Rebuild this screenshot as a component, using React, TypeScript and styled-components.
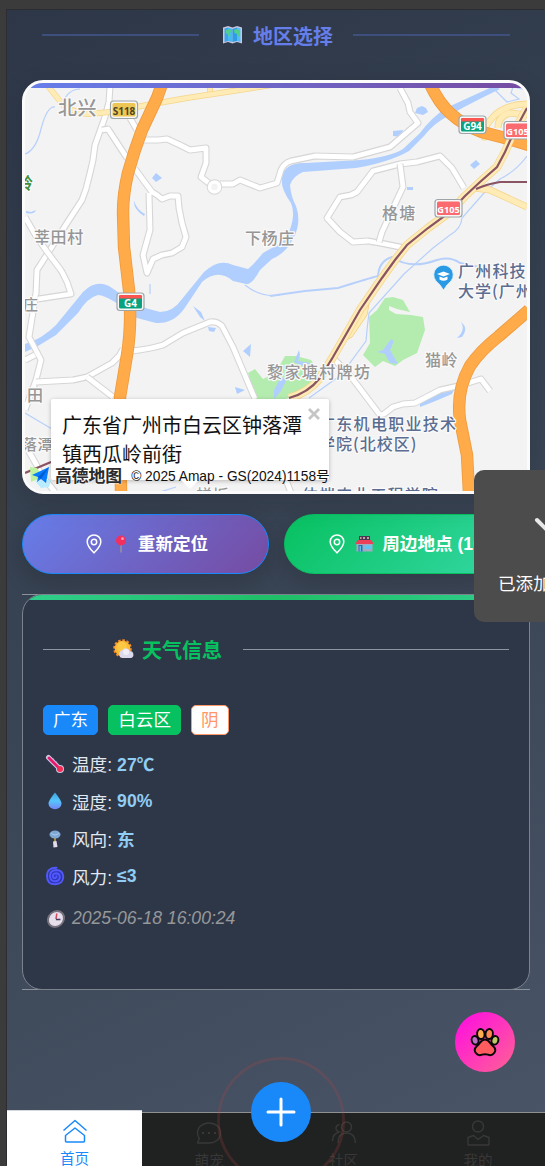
import React from "react";
import styled, { createGlobalStyle, css } from "styled-components";

const sans = `"Liberation Sans", "Noto Sans CJK SC", sans-serif`;

const Global = createGlobalStyle`
  * { box-sizing: border-box; }
  html, body { margin: 0; background: #3b3b3b; overflow: hidden; }
  body { font-family: ${sans}; font-size: 17.6px; }
  svg { display: block; flex: none; }
`;

const Phone = styled.div`
  position: relative;
  margin: 10px 0 0 7px;
  width: 538px;
  height: 1156px;
  overflow: hidden;
  display: flex;
  flex-direction: column;
  background: linear-gradient(155deg, #2d3748 0%, #343f4f 30%, #3a4555 55%, #4a5568 100%);
  box-shadow: -1px -1px 0 #2c2d30;
`;

const Content = styled.main`
  flex: 1;
  min-height: 0;
  padding: 0 15px;
  display: flex;
  flex-direction: column;
`;

const Divider = styled.div<{ $line: string; $thick: number; $color: string }>`
  display: flex;
  align-items: center;
  gap: 20px;
  padding: 0 20px;
  height: 30px;
  color: ${(p) => p.$color};
  font-size: 20px;
  font-weight: 700;
  white-space: nowrap;
  &::before, &::after {
    content: "";
    flex: 1;
    height: ${(p) => p.$thick}px;
    background: ${(p) => p.$line};
  }
`;

const TitleText = styled.span`
  display: flex;
  align-items: center;
  gap: 10px;
  padding-left: 3px;
`;

const RegionTitle = styled(Divider)`
  margin-top: 10px;
`;

const WeatherTitle = styled(Divider)`
  margin-top: 39px;
  gap: 21px;
  &::before { flex: 0 0 47px; }
  ${TitleText} { gap: 7px; padding-left: 2px; }
`;

const MapCard = styled.section`
  position: relative;
  margin-top: 30px;
  height: 414px;
  flex: none;
  border: 3px solid #fbfbfb;
  border-radius: 21px;
  overflow: hidden;
  background: #f3f3f3;
  box-shadow: 0 8px 28px rgba(0, 0, 0, 0.12);
  &::before {
    content: "";
    position: absolute;
    z-index: 2;
    inset: 0 0 auto 0;
    height: 5px;
    background: linear-gradient(90deg, #667eea, #764ba2);
  }
`;

const InfoWindow = styled.div`
  position: absolute;
  left: 26px;
  top: 316px;
  width: 278px;
  height: 81px;
  padding: 13px 11px;
  border-radius: 2px;
  background: #fff;
  color: #111;
  font-size: 20px;
  line-height: 28.5px;
  box-shadow: 0 1px 4px rgba(0, 0, 0, 0.25);
  &::after {
    content: "";
    position: absolute;
    left: 130px;
    top: 81px;
    border: 9px solid transparent;
    border-top-color: #fff;
    border-bottom: 0;
  }
`;

const CloseMark = styled.svg`
  position: absolute;
  right: 9px;
  top: 9px;
`;

const MapCredit = styled.div`
  position: absolute;
  left: 6px;
  bottom: 5px;
  display: flex;
  align-items: center;
  height: 22px;
  color: #111;
  font-size: 13.75px;
  white-space: nowrap;
`;

const MapBrand = styled.b`
  margin: 0 9px 0 4px;
  font-size: 16.8px;
  font-weight: 700;
  color: #2b2b2b;
  text-shadow: 0 0 2px #fff, 0 0 2px #fff;
`;

const Actions = styled.div`
  display: grid;
  grid-template-columns: 247px 247px;
  gap: 15px;
  margin-top: 20px;
`;

const PillButton = styled.button<{ $tone: "primary" | "success" }>`
  height: 60px;
  display: flex;
  align-items: center;
  justify-content: center;
  border-radius: 30px;
  padding: 0 0 3px 2px;
  font: 700 17.6px ${sans};
  color: #fff;
  white-space: nowrap;
  box-shadow: 0 8px 24px rgba(0, 0, 0, 0.16);
  ${(p) =>
    p.$tone === "primary"
      ? css`border: 1px solid #1989fa; background: linear-gradient(135deg, #667eea, #764ba2);`
      : css`border: 1px solid #07c160; background: linear-gradient(135deg, #07c160, #38d9a9);`}
  svg { margin-top: 2px; }
  svg + svg { margin: 2px 8px 0 9px; }
`;

const WeatherCard = styled.section`
  position: relative;
  margin-top: 20px;
  height: 396px;
  flex: none;
  border-top: 1px solid #8b919b;
  border-bottom: 1px solid #8b919b;
`;

const WeatherBody = styled.div`
  position: relative;
  height: 396px;
  margin-top: -1px;
  border: 1px solid #7b838f;
  border-radius: 20px;
  overflow: hidden;
  background: #2e3748;
  &::before {
    content: "";
    position: absolute;
    inset: 0 0 auto 0;
    height: 5px;
    background: linear-gradient(90deg, #2fcf8c, #1fbf68 50%, #2fcf8c);
  }
`;

const Tags = styled.div`
  display: flex;
  gap: 10px;
  margin: 41px 20px 0;
`;

const Tag = styled.span<{ $bg: string; $fg?: string; $edge?: string }>`
  height: 30px;
  line-height: 28px;
  padding: 0 9px;
  border-radius: 5px;
  border: 1px solid ${(p) => p.$edge ?? p.$bg};
  background: ${(p) => p.$bg};
  color: ${(p) => p.$fg ?? "#fff"};
`;

const Facts = styled.div`
  margin: 10px 20px 0;
`;

const Fact = styled.div`
  display: flex;
  align-items: center;
  height: 37.5px;
  color: #e2e8f0;
  svg { margin: 0 7px 0 2px; }
  b { margin-left: 5px; color: #90cdf4; }
`;

const Updated = styled(Fact)`
  margin-top: 5px;
  color: #969799;
  font-style: italic;
  svg { transform: skewX(-8deg); margin: 0 6px 0 3px; }
`;

const PawButton = styled.button`
  position: absolute;
  left: 447.5px;
  top: 1002px;
  width: 60px;
  height: 60px;
  padding: 0;
  border: 0;
  border-radius: 50%;
  display: grid;
  place-items: center;
  background: linear-gradient(135deg, #ff0ae4, #ff6393);
`;

const TabBar = styled.nav`
  flex: none;
  display: grid;
  grid-template-columns: 135px repeat(3, 134.4px);
  height: 54px;
  border-top: 1px solid #8f9092;
  background: #202121;
`;

const Tab = styled.a<{ $active?: boolean }>`
  display: flex;
  flex-direction: column;
  align-items: center;
  gap: 4px;
  height: 64px;
  padding-top: 7px;
  font-size: 14.6px;
  line-height: 22px;
  color: #383838;
  ${(p) =>
    p.$active &&
    css`color: #1989fa; background: #fff; margin-top: -3px; border-top: 1px solid #d5d8dc;`}
`;

const Ring = styled.div`
  position: absolute;
  left: 210px;
  top: 1047px;
  width: 128px;
  height: 128px;
  border: 3px solid rgba(190, 70, 70, 0.2);
  border-radius: 50%;
`;

const AddButton = styled.button`
  position: absolute;
  left: 244px;
  top: 1072px;
  width: 60px;
  height: 60px;
  padding: 0;
  border: 0;
  border-radius: 50%;
  display: grid;
  place-items: center;
  background: #1989fa;
`;

const Toast = styled.div`
  position: absolute;
  left: 467px;
  top: 460px;
  width: 154px;
  height: 152px;
  padding: 27px 24px;
  border-radius: 10px;
  background: #4c4c4c;
  color: #fff;
  font-size: 17.6px;
  line-height: 26px;
  white-space: nowrap;
  svg { margin: 0 auto 20px; }
`;

const Minor = ({ d }: { d: string }) => (
  <g fill="none" strokeLinejoin="round">
    <path d={d} stroke="#d6d6d6" strokeWidth="7" />
    <path d={d} stroke="#fff" strokeWidth="4.8" />
  </g>
);

const Major = ({ d, w = 6 }: { d: string; w?: number }) => (
  <g fill="none" strokeLinejoin="round">
    <path d={d} stroke="#f5d58c" strokeWidth={w} />
    <path d={d} stroke="#ffebb5" strokeWidth={w - 1.5} />
  </g>
);

const Express = ({ d }: { d: string }) => (
  <g fill="none" strokeLinejoin="round">
    <path d={d} stroke="#ee9a3d" strokeWidth="12.4" />
    <path d={d} stroke="#ffab4a" strokeWidth="10.8" />
  </g>
);

const minorRoads = [
  "M110 86L109 102L105 117L95 145L93 160L90 173L86 189L82 200L67 223L48 253L37 270L36 293L29 337L41 360L36 380L25 410",
  "M25 217L36 236L48 253L60 269L62 272L67 282L71 294L38 299",
  "M102 130L108 129L127 158",
  "M135 169L152 192L157 195L162 199L170 196L178 196L179 208L182 223L186 237L182 247L172 253L162 255L153 259L147 273L143 255L150 230L149 193",
  "M130 118L137 130",
  "M144 140L158 140L167 139L180 145L190 150L206 148L206 163L201 177L210 184M220 184L233 184L240 180L260 188L277 183L281 170Q284 163 291 161L315 156L353 157L390 147L418 123L410 112L408 103L400 88",
  "M464 188L452 168L440 156L417 162L400 164L373 171L357 192L351 195L340 197L327 218L340 232L353 242L368 241L380 243L405 248",
  "M400 164L403 187L394 206L382 232L379 242",
  "M36 382L73 380L87 377L112 363L119 356L123 349",
  "M87 377L113 397",
  "M132 351Q150 349 163 345L183 333L210 322Q217 321 222 326L233 347L255 399",
  "M25 360L35 355",
  "M335 360L352 378L380 415L384 414L393 407L403 404L415 403L440 390L458 386",
  "M468 383L481 379L490 391",
  "M28 450L36 464L42 476L55 492M286 480L291 493",
];

interface LabelProps { x: number; y: number; size?: number; fill?: string; gap?: number; weight?: number; children: string }
const Label = ({ x, y, size = 16, fill = "#969696", gap = 0.6, weight = 500, children }: LabelProps) => (
  <text
    x={x} y={y} fontSize={size} fill={fill} letterSpacing={gap} fontWeight={weight}
    stroke="#fafafa" strokeWidth="2.5" strokeLinejoin="round" paintOrder="stroke"
    fontFamily={`"Noto Sans CJK SC", sans-serif`}
  >
    {children}
  </text>
);

const Shield = ({ x, y, kind, text }: { x: number; y: number; kind: "s" | "g" | "r"; text: string }) => {
  const fill = { s: "#eec653", g: "#08a37e", r: "#fb6a6e" }[kind];
  return (
    <g>
      <rect x={x} y={y} width="27" height="17.5" rx="3" fill="#f7f7f7" stroke="#9ea5a8" strokeWidth="1.2" />
      <rect x={x + 2} y={y + 2} width="23" height="13.5" rx="1.5" fill={fill} />
      {kind === "g" && <path d={`M${x + 2} ${y + 5.5}v-2q0-1.500 1.500-1.500h20q1.500 0 1.500 1.500v2z`} fill="#fb5551" />}
      <text
        x={x + 13.5} y={y + 13.7} textAnchor="middle" fontSize={kind === "r" ? 9.2 : 10} fontWeight="700"
        fill={kind === "s" ? "#4c4528" : "#fff"} fontFamily={`"Noto Sans", sans-serif`}
      >
        {text}
      </text>
    </g>
  );
};

const trunk =
  "M289 398Q308 393 320 378L333 357L360 310L382 278L395 260L407 245L428 228L450 212L465 196L480 182L497 167L505 152L513 134L527 108";

const StreetMap = () => (
  <svg width="502" height="408" viewBox="25 83 502 408">
    <rect x="25" y="83" width="502" height="408" fill="#f3f3f3" />
    <g fill="#b4ecb0">
      <path d="M393 297L403 300L410 312L397 309L389 306L389 310L396 314L411 315L423 317L425 330L417 353L403 360L395 366L383 361L375 367L363 355L370 343L369 317L377 310L385 298Z" />
      <path d="M248 373L255 369L263 379L276 372L285 356L296 356L311 360L320 373L305 390L286 399L256 399Z" />
    </g>
    <g fill="#b0cfff">
      <path d="M25 344Q42 339 56 325L83 292Q97 278 112 288L138 306L160 312Q173 312 182 299L204 272Q219 258 233 265L248 269Q254 264 263 253L270 249Q286 242 289 232Q296 215 291 203Q280 188 282 177Q285 162 306 163L360 160Q390 157 403 149L420 133Q431 118 446 108L494 86L500 89Q467 105 448 116Q433 124 424 136L409 151Q390 162 356 168L303 172Q293 176 290 185Q291 197 296 206Q302 223 293 239Q286 253 272 259L260 270Q252 285 246 284L233 281Q218 268 202 282L184 309Q173 324 156 323L137 318Q110 296 98 295Q88 297 78 313L56 335L38 346L25 352Z" />
      <path d="M152 178l4-5 6 5-6 4zM415 113l2-5 5-2 4 2 2 4-5 3zM393 131l10-1-2 7-8-1zM470 165l6-5 4 4-6 5zM407 187h6v3h-6zM193 306l8 6 4 9-5-4zM208 327l8 1-2 4-5-1zM243 351l8-7-1 13zM235 387l10 3-8 4zM377 352l6-2 8-11 3 2-4 9 8 14-8-1-5-9zM420 403l20-11 15-4-3 6-19 8-13 5zM461 322q8 6 1 15l-5 1q9-8 4-16zM274 390l7-13 6 2-6 12-7 8zM294 362l5-12 1 5-2 6 13 2-2 5-9-3zM26 211l5 1 5-2q-2 5-10 3zM134 201q3 9 11 13l-1 2q-11-7-10-15z" />
    </g>
    <g fill="none" stroke="#b7d0fb" strokeWidth="1.2">
      <path d="M25 154Q36 150 41 129Q47 106 55 107M62 104Q68 89 80 89" />
      <path d="M338 288Q370 278 378 276Q379 261 392 257Q410 270 437 260Q450 256 460 263L484 268M270 296L305 291L338 288" strokeWidth="2" />
      <path d="M527 156Q516 171 500 179L484 193L462 218Q461 229 450 235L433 248L404 274L369 313Q367 328 366 341L341 375L309 398" />
      <path d="M495 90l12 12 12-3-8-6 2-6 14 3M25 413L52 429M245 285Q261 298 280 295M150 284v10M160 492L176 487" />
    </g>
    {minorRoads.map((d) => <Minor key={d} d={d} />)}
    <circle cx="214.500" cy="187" r="5" fill="none" stroke="#d6d6d6" strokeWidth="5.5" />
    <circle cx="214.500" cy="187" r="5" fill="#f3f3f3" stroke="#fff" strokeWidth="3.6" />
    <Major d="M210 96L210 84" />
    <Major d="M48 86L63 105Q75 113 88 114L110 112L147 105L187 98L233 91L278 84" />
    <Major d="M475 188L490 190L527 207" w={7} />
    <Major d="M529 104Q505 104 493 117Q482 129 484 137L497 134M498 128Q498 116 510 113L527 115" w={7} />
    <path d="M345 341L359 313L370 298L367 315L352 337Z" fill="#ffebb5" stroke="#f5d58c" />
    <Major d={trunk} w={8.5} />
    <Express d="M162 84L157 98L142 130Q134 151 128 173Q123 194 123 213L124 247L129 290Q132 325 127 355L120 397L121 492" />
    <Express d="M430 84Q439 103 450 113Q464 126 482 132L505 138L529 145" />
    <Express d="M529 310L499 336Q480 351 470 366Q456 391 460 420L467 455L469 493" />
    <path d="M480 182L497 167L505 152L513 134L527 108" fill="none" stroke="#ffebb5" strokeWidth="7" />
    <path d={trunk} fill="none" stroke="#8a5463" strokeWidth="2.200" />
    <path d="M476 189Q487 184 500 182L527 182M25 473L51 462" fill="none" stroke="#8a5463" strokeWidth="2.200" />
    <path d="M30 467l7 1 6 9-12 5z" fill="#bff29c" />
    <path d="M35 481l16-1-2 7-8 1z" fill="#b9ecff" />
    <Shield x={110.5} y={101} kind="s" text="S118" />
    <Shield x={117} y={293} kind="g" text="G4" />
    <Shield x={459} y={116} kind="g" text="G94" />
    <Shield x={435} y={199.500} kind="r" text="G105" />
    <Shield x={504} y={121.500} kind="r" text="G105" />
    <Label x={58} y={115} size={19}>北兴</Label>
    <Label x={17} y={189} fill="#3e8f3e" weight={700}>岭</Label>
    <Label x={34} y={243}>莘田村</Label>
    <Label x={245} y={244}>下杨庄</Label>
    <Label x={382} y={219} gap={1.3}>格塘</Label>
    <Label x={23} y={310} size={15}>庄</Label>
    <Label x={27} y={401}>田</Label>
    <Label x={22} y={450} size={15}>落潭</Label>
    <Label x={425} y={366}>猫岭</Label>
    <Label x={267} y={378} gap={1.400}>黎家塘村牌坊</Label>
    <Label x={196} y={501}>蝉坂</Label>
    <Label x={458} y={277} fill="#5b6d90" gap={1.200}>广州科技</Label>
    <Label x={458} y={297} fill="#5b6d90" gap={1}>大学(广州</Label>
    <Label x={319} y={430} fill="#5b6d90" gap={1.300}>广东机电职业技术</Label>
    <Label x={319} y={450} fill="#5b6d90" gap={1}>学院(北校区)</Label>
    <Label x={302} y={501} fill="#5b6d90" gap={1.100}>仲恺农业工程学院</Label>
    <path d="M443.500 290Q440 284 436 281A9.700 9.700 0 1 1 451 281Q447 284 443.500 290Z" fill="#2b9ae4" stroke="#dceefa" strokeWidth=".8" />
    <path d="M437 274l6.500-2.500 6.500 2.500-6.500 2.500zM439.500 276.500v3q4 2.500 8 0v-3l-4 1.500z" fill="#fff" />
  </svg>
);

const WorldMap = () => (
  <svg width="21" height="20" viewBox="0 0 21 20">
    <path d="M1 2.500L6 1l4.500 1.500L15 1l5 1.500v16L15 17l-4.500 1.500L6 17l-5 1.500z" fill="#c9c6de" />
    <path d="M2.500 3.500L6 2.500v13.500l-3.500 1z" fill="#3aa4e8" /><path d="M6 2.500l4.500 1.500v13L6 16z" fill="#46b8f4" />
    <path d="M10.500 4L15 2.500V16l-4.500 1z" fill="#2f9de6" /><path d="M15 2.500l3.500 1V17L15 16z" fill="#52bdf6" />
    <path d="M4 5l3-1 2.500 2-2 2.500 1 1-1 3.500-2-4L3.500 8zM12 5l2.500-1 3 1.500v4l-1.500 2.500-1-3-2.500-1z" fill="#4fd08c" />
  </svg>
);

const SunCloud = () => (
  <svg width="22" height="20" viewBox="0 0 22 20">
    <circle cx="9.500" cy="9.500" r="8.300" fill="none" stroke="#f58a2c" strokeWidth="2" strokeDasharray="2.6 1.700" />
    <circle cx="9.500" cy="9.500" r="7.800" fill="#fbb933" /><circle cx="9" cy="8" r="5" fill="#fdc944" />
    <path d="M9.500 19a3.800 3.800 0 0 1-.6-7.400A4.300 4.300 0 0 1 16.800 12 3.600 3.600 0 0 1 18 19z" fill="#dcd8ec" />
    <circle cx="13" cy="13" r="3" fill="#efedf6" />
  </svg>
);

const LocationIcon = () => (
  <svg width="18" height="20" viewBox="0 0 18 20" fill="none" stroke="#fff" strokeWidth="1.500">
    <path d="M9 18.800C6.500 16.200 2.200 12.300 2.200 7.700a6.800 6.800 0 0 1 13.600 0C15.800 12.300 11.500 16.200 9 18.800z" />
    <circle cx="9" cy="8" r="2.700" />
  </svg>
);

const Pushpin = () => (
  <svg width="18" height="18" viewBox="0 0 18 18">
    <path d="M8 9h2v8.500H8z" fill="#8f86a8" />
    <circle cx="9" cy="5.500" r="5" fill="#f22f5f" /><circle cx="10.500" cy="3.700" r="1.400" fill="#ff9db5" />
  </svg>
);

const Store = () => (
  <svg width="19" height="18" viewBox="0 0 19 18">
    <path d="M4 1h11v4H4z" fill="#463a55" /><path d="M5 2h1.500v2H5zM8 2h2v2H8zM12 2h2v2h-2z" fill="#d09a9e" />
    <path d="M1.500 8h16v8.500h-16z" fill="#a4a9c2" /><path d="M2.500 5h14l2 4h-18z" fill="#ed3f5a" />
    <path d="M3.500 10h4v6.500h-4z" fill="#2272a8" /><path d="M4.500 11H6v5.500H4.500z" fill="#54c2f4" />
    <path d="M9.500 10.500h6.500v3.500H9.500z" fill="#5cc5f8" />
  </svg>
);

const Thermometer = () => (
  <svg width="20" height="20" viewBox="0 0 20 20">
    <path d="M3.500 3.500l10 10" stroke="#cfc8e4" strokeWidth="5" strokeLinecap="round" />
    <circle cx="15" cy="15" r="4" fill="#cfc8e4" />
    <path d="M4 4l10 10" stroke="#e8186c" strokeWidth="2.800" strokeLinecap="round" />
    <circle cx="15" cy="15" r="3" fill="#f52d55" /><path d="M8 4l1.200 1.200M11 7l1.200 1.200" stroke="#76709a" />
  </svg>
);

const Droplet = () => (
  <svg width="20" height="20" viewBox="0 0 20 20">
    <defs><linearGradient id="drop" x1="0" y1="0" x2="0" y2="1"><stop offset="0" stopColor="#3fa2dd" /><stop offset=".5" stopColor="#55c6fb" /><stop offset="1" stopColor="#7584f5" /></linearGradient></defs>
    <path d="M10 1.500q6.500 8 6.500 11a6.500 5.800 0 0 1-13 0q0-3 6.500-11z" fill="url(#drop)" />
  </svg>
);

const WindChime = () => (
  <svg width="20" height="20" viewBox="0 0 20 20">
    <ellipse cx="10" cy="5.500" rx="5.500" ry="4" fill="#7fa9d4" /><path d="M6 4q4 4 8 0" stroke="#a9cbed" fill="none" />
    <path d="M10 9v4" stroke="#d8b548" strokeWidth="1.300" /><path d="M8 12.500l3.500-.5 1 6-4 .5z" fill="#e4dcec" />
  </svg>
);

const Cyclone = () => (
  <svg width="20" height="20" viewBox="0 0 20 20" fill="none" strokeLinecap="round">
    <circle cx="10" cy="10.500" r="7" fill="#2f36b8" />
    <path d="M11.500 1.800Q2 1.500 2 10q0 8.300 8 8.300 8-.3 8.300-7.500-.3-6.800-7.300-6.800-6 .4-6 6 .3 5.300 5.300 5.300 4.500-.4 4.500-4.500-.4-3.500-4-3.500-3 .3-3 2.800.3 2.200 2.500 2 1.500-.4 1-2" stroke="#5158ff" strokeWidth="1.900" />
  </svg>
);

const Clock = () => (
  <svg width="20" height="20" viewBox="0 0 20 20">
    <circle cx="10" cy="10" r="8" fill="#e4dfea" stroke="#77717e" strokeWidth="2" />
    <path d="M10 4.500V10" stroke="#d8435f" strokeWidth="1.500" /><path d="M10 10.500h4.500" stroke="#453b5c" strokeWidth="1.500" />
  </svg>
);

const Paw = () => (
  <svg width="30" height="30" viewBox="0 0 30 30" stroke="#080808" strokeWidth="1.900">
    <ellipse cx="5" cy="13.300" rx="3.400" ry="4.300" fill="#bb70c8" transform="rotate(-14 5 13)" />
    <ellipse cx="25" cy="13.300" rx="3.400" ry="4.300" fill="#bccb60" transform="rotate(14 25 13)" />
    <ellipse cx="10.800" cy="7" rx="3.700" ry="5" fill="#ffab4f" transform="rotate(-6 11 7)" />
    <ellipse cx="19.200" cy="7" rx="3.700" ry="5" fill="#ff8650" transform="rotate(6 19 7)" />
    <path d="M15 12.500c4 0 4.500 3.500 8 6.500 5.500 5-.5 10.500-5 8.700-2-.7-4-.7-6 0-4.500 1.800-10.500-3.700-5-8.700C10.500 16 11 12.500 15 12.500z" fill="#ff5c60" />
  </svg>
);

const HomeIcon = () => (
  <svg width="26" height="26" viewBox="0 0 26 26" fill="none" stroke="currentColor" strokeWidth="1.500" strokeLinejoin="round">
    <path d="M1.500 12.500L13 2.500l11.500 10" /><path d="M3.500 17.500L13 10l9.500 7.500v5.500q0 1-1 1h-17q-1 0-1-1z" />
  </svg>
);

const ChatIcon = () => (
  <svg width="26" height="26" viewBox="0 0 26 26" fill="none" stroke="currentColor" strokeWidth="1.400">
    <path d="M1.500 23l1.800-4.500A10 10 0 0 1 1.500 13C1.500 7 6.500 3 13 3s11.500 4 11.500 10S19.500 23 13 23z" strokeLinejoin="round" />
    <path d="M6 13h2M12 13h2M18 13h2" strokeWidth="2.200" />
  </svg>
);

const FriendsIcon = () => (
  <svg width="26" height="26" viewBox="0 0 26 26" fill="none" stroke="currentColor" strokeWidth="1.400">
    <circle cx="15.500" cy="7" r="5" /><path d="M7 23q0-10 8.500-10T24.500 23M8.500 4.500q-4 1-3.500 4.500.5 2 3 3Q1.500 14 1.500 21" />
  </svg>
);

const UserIcon = () => (
  <svg width="26" height="26" viewBox="0 0 26 26" fill="none" stroke="currentColor" strokeWidth="1.400">
    <circle cx="13" cy="6.500" r="5.500" /><path d="M8.500 15.500L3 17.500v7q0 .5.500.5h20q.5 0 .5-.5v-7l-5.500-2-5.500 4z" strokeLinejoin="round" />
  </svg>
);

const facts = [
  { icon: <Thermometer />, name: "温度", value: "27℃" },
  { icon: <Droplet />, name: "湿度", value: "90%" },
  { icon: <WindChime />, name: "风向", value: "东" },
  { icon: <Cyclone />, name: "风力", value: "≤3" },
];

export default function App() {
  return (
    <>
      <Global />
      <Phone>
        <Content>
          <RegionTitle $line="#3e4e7d" $thick={2} $color="#667eea">
            <TitleText><WorldMap />地区选择</TitleText>
          </RegionTitle>
          <MapCard>
            <StreetMap />
            <InfoWindow>
              广东省广州市白云区钟落潭镇西瓜岭前街
              <CloseMark width="12" height="12" viewBox="0 0 12 12" stroke="#c5c5c5" strokeWidth="2.800">
                <path d="M1 1l10 10M11 1L1 11" />
              </CloseMark>
            </InfoWindow>
            <MapCredit>
              <svg width="20" height="18" viewBox="0 0 20 18">
                <path d="M1 9L18 1l-3 16-5-4-4 3 1-5z" fill="#087cff" /><path d="M7 11L18 1l-8 12z" fill="#045bd0" />
              </svg>
              <MapBrand>高德地图</MapBrand>
              © 2025 Amap - GS(2024)1158号
            </MapCredit>
          </MapCard>
          <Actions>
            <PillButton $tone="primary"><LocationIcon /><Pushpin />重新定位</PillButton>
            <PillButton $tone="success"><LocationIcon /><Store />周边地点 (10)</PillButton>
          </Actions>
          <WeatherCard>
            <WeatherBody>
              <WeatherTitle $line="#8c96a0" $thick={1} $color="#07c160">
                <TitleText><SunCloud />天气信息</TitleText>
              </WeatherTitle>
              <Tags>
                <Tag $bg="#1989fa">广东</Tag>
                <Tag $bg="#07c160">白云区</Tag>
                <Tag $bg="#fff" $fg="#ff976a" $edge="#ff976a">阴</Tag>
              </Tags>
              <Facts>
                {facts.map((f) => (
                  <Fact key={f.name}>{f.icon}{f.name}:<b>{f.value}</b></Fact>
                ))}
                <Updated><Clock />2025-06-18 16:00:24</Updated>
              </Facts>
            </WeatherBody>
          </WeatherCard>
        </Content>
        <TabBar>
          <Tab $active><HomeIcon />首页</Tab>
          <Tab><ChatIcon />萌宠</Tab>
          <Tab><FriendsIcon />社区</Tab>
          <Tab><UserIcon />我的</Tab>
        </TabBar>
        <Ring />
        <AddButton>
          <svg width="30" height="30" viewBox="0 0 30 30" stroke="#fff" strokeWidth="3" strokeLinecap="round"><path d="M2 15h26M15 2v26" /></svg>
        </AddButton>
        <PawButton><Paw /></PawButton>
        <Toast>
          <svg width="54" height="54" viewBox="0 0 54 54" fill="none" stroke="#e8e8e8" strokeWidth="4"><path d="M13 23l15 15 24-24" strokeLinecap="round" /></svg>
          已添加
        </Toast>
      </Phone>
    </>
  );
}
